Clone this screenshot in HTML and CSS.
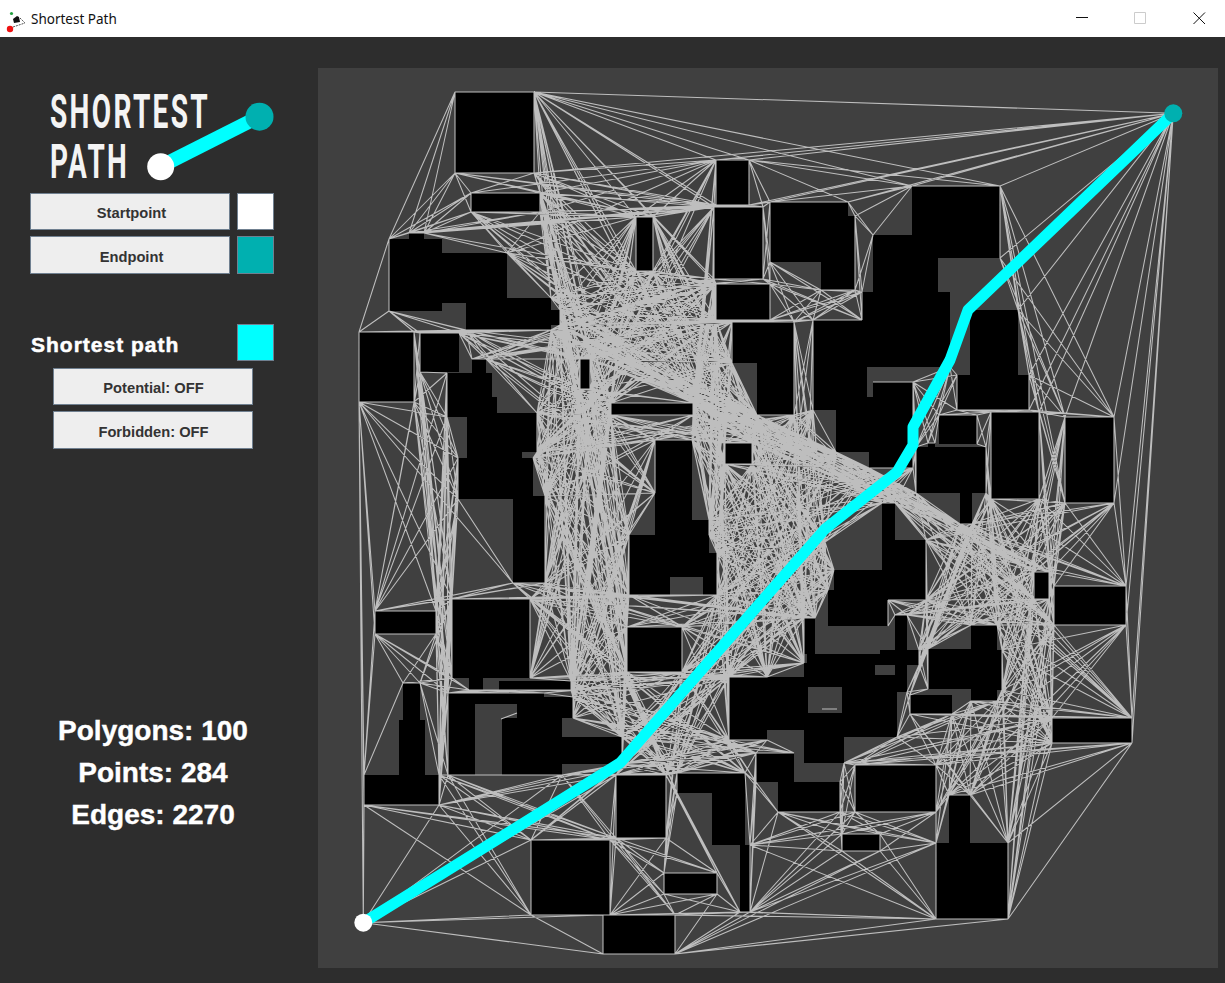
FILE: index.html
```html
<!DOCTYPE html>
<html lang="en">
<head>
<meta charset="utf-8">
<title>Shortest Path</title>
<link rel="stylesheet" href="styles.css">
</head>
<body>
<div class="window">
  <header class="titlebar">
    <svg class="app-icon" viewBox="0 0 30 30" width="30" height="30" aria-hidden="true">
      <circle class="dot-red" cx="10" cy="25" r="3.2"/>
      <circle class="dot-green" cx="11.5" cy="9.5" r="1.6"/>
      <path class="icon-black" d="M13 15 l4-3 2 1 1 5-6 1z"/>
      <path class="icon-dash" d="M13 23 l12-4 M20 14 l5 5"/>
    </svg>
    <span class="title">Shortest Path</span>
    <div class="controls">
      <svg viewBox="0 0 59 37" width="59" height="37" aria-hidden="true"><path class="ctl" d="M28 17.500h12"/></svg>
      <svg viewBox="0 0 59 37" width="59" height="37" aria-hidden="true"><path class="ctl ctl-off" d="M27.500 12.500h11v11h-11z"/></svg>
      <svg viewBox="0 0 59 37" width="59" height="37" aria-hidden="true"><path class="ctl" d="M27.500 12.500l11.500 11.500M39 12.500l-11.500 11.500"/></svg>
    </div>
  </header>
  <main class="main">
    <aside class="sidebar">
      <svg class="logo" viewBox="0 37 318 156" width="318" height="156" role="img" aria-label="Shortest Path">
        <text class="logo-text" x="50" y="128" textLength="160" lengthAdjust="spacingAndGlyphs">SHORTEST</text>
        <text class="logo-text" x="50" y="178" textLength="79" lengthAdjust="spacingAndGlyphs">PATH</text>
        <line class="logo-line" x1="160.500" y1="166.500" x2="259.500" y2="116.500"/>
        <circle class="logo-end" cx="259.500" cy="116.700" r="14"/>
        <circle class="logo-start" cx="160.700" cy="166.700" r="13.500"/>
      </svg>
      <div class="row row-first">
        <button class="btn btn-wide">Startpoint</button>
        <span class="swatch swatch-white"></span>
      </div>
      <div class="row row-second">
        <button class="btn btn-wide">Endpoint</button>
        <span class="swatch swatch-teal"></span>
      </div>
      <div class="row row-path">
        <span class="path-label">Shortest path</span>
        <span class="swatch swatch-cyan"></span>
      </div>
      <div class="toggles">
        <button class="btn btn-short">Potential: OFF</button>
        <button class="btn btn-tall">Forbidden: OFF</button>
      </div>
      <div class="stats">
        <div>Polygons: 100</div>
        <div>Points: 284</div>
        <div>Edges: 2270</div>
      </div>
    </aside>
    <section class="stage">
      <svg id="graph" class="graph" viewBox="318 68 900 900" width="900" height="900" aria-hidden="true"></svg>
    </section>
  </main>
</div>
<script src="graph.js"></script>
</body>
</html>
```
FILE: styles.css
```css
* { box-sizing: border-box; }
html, body { margin: 0; height: 100%; overflow: hidden; }
body { background: #2d2d2d; font-family: "Liberation Sans", Arial, sans-serif; }
.window { display: flex; flex-direction: column; width: 1225px; height: 983px; }

.titlebar { display: flex; align-items: center; height: 37px; background: #fff; flex: none; position: relative; }
.app-icon { flex: none; }
.title { font-family: "Noto Sans", sans-serif; font-size: 13.500px; color: #111; margin-left: 1px; margin-top: 1px; }
.controls { margin-left: auto; display: flex; }
.controls svg { display: block; }
.ctl { fill: none; stroke: #111; stroke-width: 1; }
.ctl-off { stroke: #cccccc; }
.dot-red { fill: #ee1111; }
.dot-green { fill: #22a040; }
.icon-black { fill: #111; }
.icon-dash { fill: none; stroke: #555; stroke-width: 1; stroke-dasharray: 2 1; }

.main { display: flex; flex: 1; min-height: 0; }
.sidebar { width: 318px; flex: none; display: flex; flex-direction: column; }
.logo { display: block; flex: none; }
.logo-text { font-family: Roboto, "Liberation Sans", sans-serif; font-weight: 700; font-size: 49px; letter-spacing: 4px; fill: #f4f4f4; }
.logo-line { stroke: #00ffff; stroke-width: 14; }
.logo-end { fill: #00b0b0; }
.logo-start { fill: #ffffff; }

.row { display: flex; margin-left: 30px; gap: 7px; }
.row-first .btn, .row-first .swatch { height: 37px; }
.row-second { margin-top: 6px; }
.row-second .btn, .row-second .swatch { height: 38px; }
.row-second .btn { padding-top: 3px; }
.row-path { margin-top: 50px; margin-left: 31px; width: 243px; justify-content: space-between; align-items: center; }

.btn {
  display: block; width: 200px; padding: 2px 0 0; background: #eeeeee;
  border: 1px solid #708090; border-radius: 0;
  font-family: "Liberation Sans", Arial, sans-serif; font-size: 14.700px; font-weight: 700; color: #333333;
}
.btn-wide { padding-left: 3px; }
.swatch { display: block; width: 37px; height: 37px; border: 1px solid #708090; flex: none; }
.swatch-white { background: #ffffff; }
.swatch-teal { background: #00b0b0; }
.swatch-cyan { background: #00ffff; }
.path-label { font-size: 21px; font-weight: 700; color: #fff; letter-spacing: 1px; -webkit-text-stroke: 0.500px #fff; position: relative; top: 2px; }

.toggles { display: flex; flex-direction: column; margin: 7px 0 0 53px; gap: 6px; }
.btn-short { height: 37px; padding-left: 1px; }
.btn-tall { height: 38px; padding-top: 3px; padding-left: 1px; }

.stats { margin-top: 261px; width: 306px; text-align: center; color: #fff; font-size: 28px; font-weight: 700; line-height: 42px; -webkit-text-stroke: 0.400px #fff; }

.stage { flex: none; margin-top: 31px; }
.graph { display: block; background: #404040; }
.obstacle { fill: #000; shape-rendering: crispEdges; }
.hole { fill: #404040; shape-rendering: crispEdges; }
.edges { fill: none; stroke: #bebebe; stroke-width: 1.050; }
.route { fill: none; stroke: #00ffff; stroke-width: 11; stroke-linejoin: round; stroke-linecap: round; }
.node-end { fill: #00b0b0; }
.node-start { fill: #ffffff; }
```
FILE: graph.js
```js
// Visibility graph over a map of polygon obstacles. Each polygon is a convex
// hull of black cells (r) plus outline points over empty notches (p); edges
// join every pair of mutually visible corners, including extra corners (n).
var START = [363.3, 922.7], END = [1173.3, 113.3];
var GROUPS = [
  { r: [[455,92,534,173]] },
  { r: [[471,193,540,212]] },
  { r: [[636,217,653,271]] },
  { r: [[716,160,749,205]] },
  { r: [[714,207,763,279]] },
  { r: [[716,284,770,320]] },
  { r: [[770,202,848,262],[821,262,855,290],[848,216,855,262]] },
  { r: [[389,239,442,311],[409,233,424,239],[442,253,507,298],[442,298,466,303],[466,298,551,330],[551,310,560,325]] },
  { r: [[359,332,414,402]] },
  { r: [[420,333,459,372]] },
  { r: [[580,359,590,389]] },
  { r: [[611,403,693,415]] },
  { r: [[725,443,752,464]] },
  { r: [[472,359,486,373],[447,373,492,397],[447,397,497,417],[467,413,537,452],[467,452,522,460]] },
  { r: [[458,458,533,499],[513,496,545,583]] },
  { r: [[655,440,692,537],[692,520,709,537]], n: [[655,493]] },
  { r: [[629,535,670,595],[670,535,709,577],[703,553,717,595]] },
  { r: [[375,611,436,634]] },
  { r: [[452,599,530,678],[469,678,483,690]] },
  { r: [[499,681,571,690]] },
  { r: [[627,627,682,672]] },
  { r: [[448,693,475,775],[475,693,544,697],[475,697,573,704],[517,704,573,718],[502,718,562,775]] },
  { r: [[562,737,622,764]], p: [[573,718]] },
  { r: [[403,683,420,720],[399,720,425,775],[364,775,439,805]] },
  { r: [[616,775,666,838]] },
  { r: [[531,840,610,915]] },
  { r: [[603,915,675,954]] },
  { r: [[664,873,717,894]] },
  { r: [[677,773,745,793],[712,793,740,845],[740,793,745,845],[740,845,750,912]] },
  { r: [[729,677,767,740],[767,677,806,730]], n: [[767,677]] },
  { r: [[804,618,815,654],[807,654,897,737],[804,663,807,737],[804,737,844,763]], h: [[808,687,842,713],[875,665,895,675]], n: [[804,663]] },
  { r: [[895,615,907,692],[880,650,919,665]] },
  { r: [[756,753,794,782],[778,782,840,812]] },
  { r: [[834,570,882,626],[882,600,888,626],[828,590,834,626]] },
  { r: [[882,503,895,540],[882,540,926,600]], p: [[825,542]] },
  { r: [[912,186,1000,258],[873,235,912,292],[862,292,950,367],[912,258,938,292],[938,298,950,367]] },
  { r: [[813,320,862,410],[862,367,867,410],[867,397,913,410],[873,382,913,410],[836,410,913,452],[869,452,913,468]] },
  { r: [[732,322,757,363],[757,322,794,415]] },
  { r: [[970,310,1018,375],[957,375,1029,410]] },
  { r: [[939,415,977,444]] },
  { r: [[991,412,1039,499]] },
  { r: [[1065,417,1114,503]] },
  { r: [[916,447,986,493],[928,443,935,457],[960,493,972,524]] },
  { r: [[1034,572,1049,599]] },
  { r: [[1054,586,1126,625]] },
  { r: [[1052,718,1132,743]] },
  { r: [[910,695,952,714]] },
  { r: [[855,765,936,812]] },
  { r: [[842,834,880,851]] },
  { r: [[936,843,1008,919],[949,795,970,843]] },
  { r: [[928,649,971,689],[971,625,997,701],[997,650,1002,690]] }
];
var DECOR = [[873,382,913,382],[822,709,837,709],[501,719,517,713]];
var ROUTE = [[363.3,922.7],[620,763],[825,529],[897,472],[913,445],[913,427],[950,360],[968,310],[1173.3,113.3]];

function hull(points) {
  var pts = points.slice().sort(function (a, b) { return a[0] - b[0] || a[1] - b[1]; });
  function cross(o, a, b) { return (a[0]-o[0])*(b[1]-o[1]) - (a[1]-o[1])*(b[0]-o[0]); }
  function half(list) {
    var out = [];
    list.forEach(function (p) {
      while (out.length > 1 && cross(out[out.length-2], out[out.length-1], p) <= 0) out.pop();
      out.push(p);
    });
    out.pop();
    return out;
  }
  return half(pts).concat(half(pts.slice().reverse()));
}

function blocked(p, q, poly) {
  var t0 = 0, t1 = 1, dx = q[0]-p[0], dy = q[1]-p[1];
  for (var i = 0; i < poly.length; i++) {
    var a = poly[i], b = poly[(i+1) % poly.length];
    var ex = b[0]-a[0], ey = b[1]-a[1], len = Math.hypot(ex, ey);
    var f0 = (ex*(p[1]-a[1]) - ey*(p[0]-a[0])) / len - 0.05;
    var d = (ex*dy - ey*dx) / len;
    if (Math.abs(d) < 1e-9) { if (f0 <= 0) return false; continue; }
    var t = -f0 / d;
    if (d > 0) { if (t > t0) t0 = t; } else { if (t < t1) t1 = t; }
    if (t1 - t0 <= 1e-6) return false;
  }
  return t1 - t0 > 1e-6;
}

var NS = "http://www.w3.org/2000/svg";
var svg = document.getElementById("graph");
function add(tag, cls, attrs) {
  var el = document.createElementNS(NS, tag);
  el.setAttribute("class", cls);
  for (var k in attrs) el.setAttribute(k, attrs[k]);
  svg.appendChild(el);
}
function cell(c, cls) { add("rect", cls, { x: c[0], y: c[1], width: c[2]-c[0], height: c[3]-c[1] }); }

var nodes = [START, END], seen = {};
function addNode(p) {
  var key = p.join(",");
  if (!seen[key]) { seen[key] = 1; nodes.push(p); }
}

var hulls = GROUPS.map(function (g) {
  var pts = (g.p || []).slice();
  g.r.forEach(function (c) {
    cell(c, "obstacle");
    pts.push([c[0],c[1]],[c[2],c[1]],[c[2],c[3]],[c[0],c[3]]);
  });
  (g.h || []).forEach(function (c) { cell(c, "hole"); });
  var h = hull(pts);
  h.forEach(addNode);
  (g.n || []).forEach(addNode);
  return h;
});

var d = [];
for (var i = 0; i < nodes.length; i++) {
  for (var j = i + 1; j < nodes.length; j++) {
    var clear = true;
    for (var k = 0; k < hulls.length && clear; k++) {
      if (blocked(nodes[i], nodes[j], hulls[k])) clear = false;
    }
    if (clear) d.push("M" + nodes[i].join(" ") + "L" + nodes[j].join(" "));
  }
}
DECOR.forEach(function (s) { d.push("M" + s[0] + " " + s[1] + "L" + s[2] + " " + s[3]); });
add("path", "edges", { d: d.join("") });
add("polyline", "route", { points: ROUTE.map(function (p) { return p.join(","); }).join(" ") });
add("circle", "node-end", { cx: END[0], cy: END[1], r: 9 });
add("circle", "node-start", { cx: START[0], cy: START[1], r: 9 });
```
